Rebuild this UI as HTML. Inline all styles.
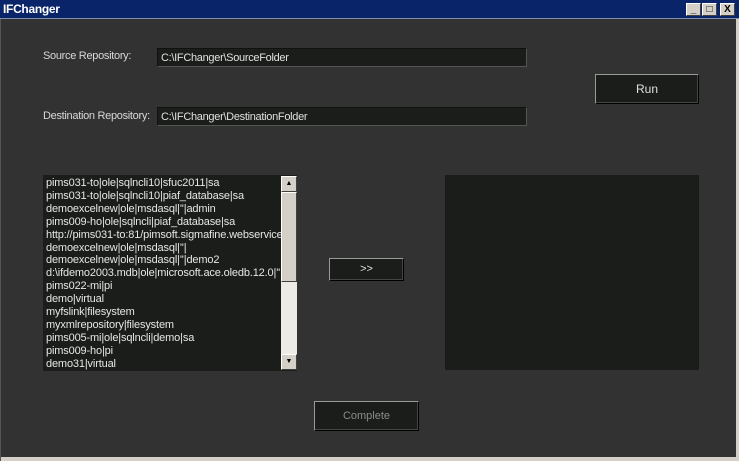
<!DOCTYPE html>
<html><head><style>
*{margin:0;padding:0;box-sizing:border-box}
body{width:739px;height:461px;background:#323232;position:relative;overflow:hidden;font-family:"Liberation Sans",Arial,sans-serif;font-size:11px;color:#d8d8d8}
.a{position:absolute}
#tb{left:0;top:0;width:739px;height:19px;background:#0a246a;border-bottom:1px solid #7f8fb0}
#tb span{position:absolute;left:3px;top:2px;color:#fff;font-weight:bold;font-size:12px;letter-spacing:-0.3px}
.wb{top:3px;width:15px;height:13px;background:#d4d0c8;border:1px solid;border-color:#fff #404040 #404040 #fff;color:#000;font-size:10px;font-weight:bold;text-align:center;line-height:11px}
.lbl{color:#d8d8d8;letter-spacing:-0.3px}
.tx{background:#1b1d1b;border:1px solid;border-color:#111 #555 #555 #111;padding:3px 3px;color:#e0e0e0;letter-spacing:-0.3px;height:19px}
.btn{background:#1b1d1b;border:1px solid;border-color:#999 #000 #000 #999;box-shadow:inset -1px -1px 0 #444;text-align:center;color:#e0e0e0}
#list{left:43px;top:175px;width:254px;height:196px;background:#1b1d1b}
#list div{padding:2px 0 0 3px;line-height:12.9px;white-space:nowrap;overflow:hidden;width:238px;letter-spacing:-0.15px;color:#e6e6e6}
#sb{left:281px;top:176px;width:16px;height:194px;background:#ecebe6}
.sbb{position:absolute;left:0;width:16px;height:16px;background:#d4d0c8;border:1px solid;border-color:#fff #404040 #404040 #fff;font-size:7px;color:#000;text-align:center;line-height:14px}
#thumb{position:absolute;left:0;top:16px;width:16px;height:90px;background:#d4d0c8;border:1px solid;border-color:#fff #404040 #404040 #fff}
</style></head><body>
<div id="tb" class="a"><span>IFChanger</span>
<div class="a wb" style="left:686px">_</div><div class="a wb" style="left:702px">□</div><div class="a wb" style="left:720px">X</div></div>
<div class="a" style="left:736px;top:19px;width:3px;height:442px;background:#d4d0c8"></div>
<div class="a" style="left:0;top:457px;width:739px;height:4px;background:#d4d0c8"></div>
<div class="a" style="left:0;top:19px;width:1px;height:442px;background:#555"></div>
<div class="a lbl" style="left:43px;top:50px">Source Repository:</div>
<div class="a tx" style="left:157px;top:48px;width:370px">C:\IFChanger\SourceFolder</div>
<div class="a lbl" style="left:43px;top:110px">Destination Repository:</div>
<div class="a tx" style="left:157px;top:107px;width:370px">C:\IFChanger\DestinationFolder</div>
<div class="a btn" style="left:595px;top:74px;width:104px;height:30px;line-height:28px;font-size:12px">Run</div>
<div id="list" class="a">
<div>pims031-to|ole|sqlncli10|sfuc2011|sa<br>pims031-to|ole|sqlncli10|piaf_database|sa<br>demoexcelnew|ole|msdasql|''|admin<br>pims009-ho|ole|sqlncli|piaf_database|sa<br>http://pims031-to:81/pimsoft.sigmafine.webservice<br>demoexcelnew|ole|msdasql|''|<br>demoexcelnew|ole|msdasql|''|demo2<br>d:\ifdemo2003.mdb|ole|microsoft.ace.oledb.12.0|''|a<br>pims022-mi|pi<br>demo|virtual<br>myfslink|filesystem<br>myxmlrepository|filesystem<br>pims005-mi|ole|sqlncli|demo|sa<br>pims009-ho|pi<br>demo31|virtual</div>
</div>
<div id="sb" class="a"><div class="sbb" style="top:0">▲</div><div id="thumb"></div><div class="sbb" style="top:178px">▼</div></div>
<div class="a btn" style="left:329px;top:258px;width:75px;height:23px;line-height:20px">&gt;&gt;</div>
<div class="a" style="left:445px;top:175px;width:254px;height:195px;background:#1b1d1b"></div>
<div class="a btn" style="left:314px;top:401px;width:105px;height:30px;line-height:28px;color:#8a8a8a">Complete</div>
</body></html>
